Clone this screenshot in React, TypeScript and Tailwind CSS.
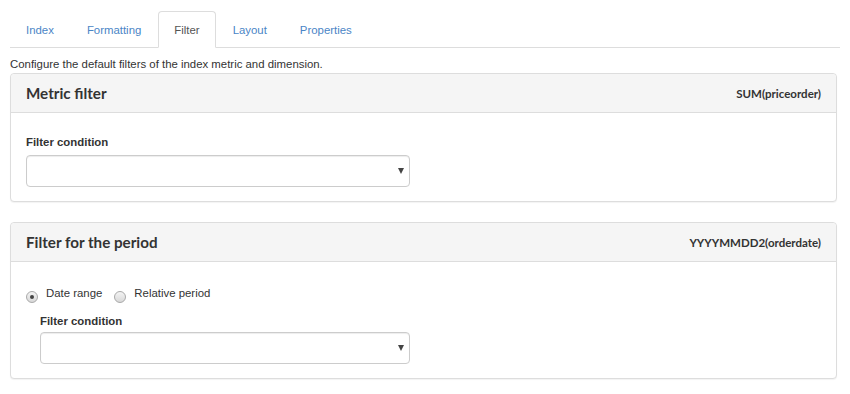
import React, { useState } from 'react';

const tabs = ['Index', 'Formatting', 'Filter', 'Layout', 'Properties'];

const SelectBox: React.FC<{ width: string }> = ({ width }) => (
  <div
    className={`relative h-[32px] ${width} rounded-[4px] border border-[#ccc] bg-white shadow-[inset_0_1px_1px_rgba(0,0,0,0.075)]`}
  >
    <span className="absolute right-[5px] top-[12px] h-0 w-0 border-x-[3.5px] border-t-[6px] border-x-transparent border-t-[#444]" />
  </div>
);

const Radio: React.FC<{ checked: boolean; label: string; onClick: () => void }> = ({ checked, label, onClick }) => (
  <label className="flex cursor-pointer items-center" onClick={onClick}>
    <span className="mt-[7px] flex h-[12px] w-[12px] items-center justify-center rounded-full border border-[#a9a9a9] bg-gradient-to-b from-[#f4f4f4] to-[#d8d8d8]">
      {checked && <span className="h-[4px] w-[4px] rounded-full bg-[#444]" />}
    </span>
    <span className="ml-[8px] leading-[17px] text-[#333]">{label}</span>
  </label>
);

const PanelHeader: React.FC<{ title: string; field: string }> = ({ title, field }) => (
  <div className="flex h-[39px] items-center justify-between rounded-t-[4px] border-b border-[#ddd] bg-[#f5f5f5] px-[15px] pt-[1px] font-['Lato',sans-serif] text-[#333]">
    <span className="text-[15.2px] font-bold">{title}</span>
    <span className="text-[11.5px] font-bold">{field}</span>
  </div>
);

export default function App() {
  const [active, setActive] = useState('Filter');
  const [mode, setMode] = useState<'range' | 'relative'>('range');

  return (
    <div className="min-h-[394px] bg-white px-[10px] pt-[11px] font-['Liberation_Sans',Arial,sans-serif] text-[11.4px] text-[#333]">
      <ul className="flex border-b border-[#ddd]">
        {tabs.map(t => (
          <li key={t} className="mr-px -mb-px">
            <button
              onClick={() => setActive(t)}
              className={`block h-[37px] rounded-t-[4px] border px-[15px] leading-[14px] ${
                t === active
                  ? 'border-[#ddd] border-b-white bg-white text-[#555]'
                  : 'border-transparent text-[#4a85c6]'
              }`}
            >
              {t}
            </button>
          </li>
        ))}
      </ul>

      <p className="pt-[8px] leading-[17px]">Configure the default filters of the index metric and dimension.</p>

      <div className="w-[827px] rounded-[4px] border border-[#ddd] bg-white shadow-[0_1px_1px_rgba(0,0,0,0.05)]">
        <PanelHeader title="Metric filter" field="SUM(priceorder)" />
        <div className="px-[15px] pb-[14px] pt-[21px]">
          <div className="mb-[4px] font-bold leading-[17px]">Filter condition</div>
          <SelectBox width="w-[384px]" />
        </div>
      </div>

      <div className="mt-[20px] w-[827px] rounded-[4px] border border-[#ddd] bg-white shadow-[0_1px_1px_rgba(0,0,0,0.05)]">
        <PanelHeader title="Filter for the period" field="YYYYMMDD2(orderdate)" />
        <div className="px-[15px] pb-[14px] pt-[22px]">
          <div className="flex items-center gap-[12px]">
            <Radio checked={mode === 'range'} label="Date range" onClick={() => setMode('range')} />
            <Radio checked={mode === 'relative'} label="Relative period" onClick={() => setMode('relative')} />
          </div>
          <div className="ml-[14px] mt-[10px]">
            <div className="mb-[2px] font-bold leading-[17px]">Filter condition</div>
            <SelectBox width="w-[370px]" />
          </div>
        </div>
      </div>
    </div>
  );
}
